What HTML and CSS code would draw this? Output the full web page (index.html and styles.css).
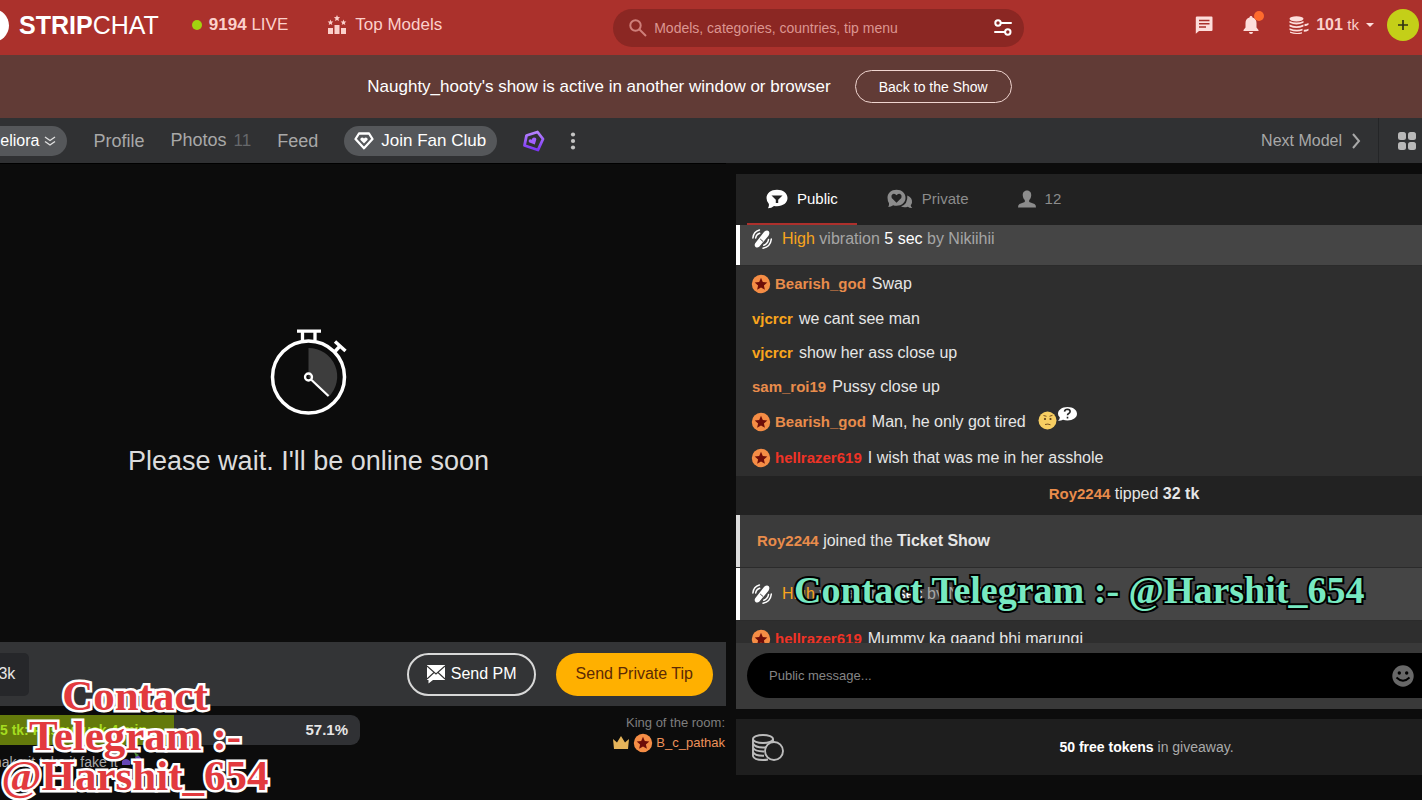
FILE: index.html
```html
<!DOCTYPE html>
<html lang="en">
<head>
<meta charset="utf-8">
<title>Stripchat</title>
<link rel="stylesheet" href="styles.css">
</head>
<body>
<svg class="defs" width="0" height="0" aria-hidden="true">
  <symbol id="star-badge" viewBox="0 0 20 20"><circle cx="10" cy="10" r="9.2" fill="#f58d45"/><path d="M10 3.8l1.8 4.1 4.5.5-3.4 3 1 4.4L10 13.5l-3.9 2.3 1-4.4-3.4-3 4.5-.5z" fill="#6e0d08"/></symbol>
  <symbol id="vibe" viewBox="0 0 20 20"><path d="M3.200 14.200L12.200 2.800q2.600-2 4.600-.6 1.300 2-.3 4.500L7.200 17.800q-1.800 1.500-3.700.2-1.500-1.700-.3-3.800z" fill="#fff"/><path d="M8.200 10l3 2.600" stroke="#444" stroke-width="1"/><path d="M.9 9C1.300 4.800 3.500 2 7.400 1M3.700 9c.3-2.400 1.600-4 4-4.800M19.300 10c-.4 4.800-3.500 8.200-8.300 9.200M16.500 10.600c-.5 2.800-2 4.600-4.700 5.600" stroke="#fff" stroke-width="1.500" fill="none" stroke-linecap="round"/></symbol>
</svg>
<div class="page">
  <header class="top">
    <a class="brand" href="#"><span class="brand-mark"></span><span><b>STRIP</b>CHAT</span></a>
    <a class="live" href="#"><i class="dot"></i><span><b>9194</b> LIVE</span></a>
    <a class="models" href="#">
      <svg width="20" height="20" viewBox="0 0 20 20" fill="#fbd0cb"><path d="M1 13h5v6H1zM7.500 10h5v9h-5zM14 13h5v6h-5zM10 0l.9 2.100 2.200.2-1.700 1.500.5 2.200L10 4.900 8.100 6l.5-2.200-1.700-1.500 2.200-.2zM3.500 4.500l.8 1.900 2.100.2-1.600 1.400.5 2-1.800-1-1.800 1 .5-2L.6 6.600l2.100-.2zM16.500 4.500l.8 1.900 2.100.2-1.600 1.400.5 2-1.800-1-1.800 1 .5-2-1.600-1.400 2.100-.2z"/></svg>
      Top Models</a>
    <form class="search">
      <svg width="18" height="18" viewBox="0 0 18 18" fill="none" stroke="#cf7f7a" stroke-width="2"><circle cx="6.500" cy="6.500" r="5.200"/><path d="M10.500 10.500l6.500 6.500"/></svg>
      <input type="text" aria-label="Search" placeholder="Models, categories, countries, tip menu">
      <button type="button" aria-label="Filters"><svg width="18" height="18" viewBox="0 0 18 18" fill="none" stroke="#fff" stroke-width="2"><circle cx="4" cy="4" r="2.700"/><path d="M7 4h10M1 13h10" stroke-linecap="round"/><circle cx="13.800" cy="13" r="2.700"/></svg></button>
    </form>
    <div class="account">
      <button type="button" aria-label="Messages"><svg width="18" height="18" viewBox="0 0 18 18"><path d="M2 .5h14.500q1 0 1 1V14q0 1-1 1H4L.8 17.800V1.500Q.8.500 2 .5z" fill="#fddedb"/><path d="M4 4.500h10.500M4 7.700h10.500M4 10.900h7" stroke="#a9302b" stroke-width="1.500"/></svg></button>
      <button type="button" class="bell" aria-label="Notifications"><svg width="16" height="18" viewBox="0 0 16 18" fill="#fddedb"><path d="M8 0c.9 0 1.500.6 1.500 1.500 2.700.6 4 2.800 4 5.500v4.500L15.500 14v1H.5v-1l2-2.500V7c0-2.700 1.300-4.900 4-5.500C6.500.6 7.100 0 8 0zM6 16h4a2 2 0 0 1-4 0z"/></svg><i class="badge"></i></button>
      <button type="button" class="tokens"><svg width="20" height="18" viewBox="0 0 20 18" fill="#fddedb"><ellipse cx="7.500" cy="2.800" rx="7" ry="2.600"/><path d="M.5 5q7 3.200 14 0v1.700q-7 3.400-14 0zM.5 8.600q7 3.200 14 0v1.800q-7 3.300-14 0zM.5 12.200q7 3 13 .6v1.700q-6 2.500-13-.6zM1 15.500q6 2.400 12 .7v1.200q-6 1.500-12-.7zM15.500 8q2.500 0 4-1v1.800q-1.500 1.300-4 1.400zM14.800 13.700q3 .1 4.700-1v1.800q-2 1.300-4.700 1.300z"/></svg><span><b>101</b> <small>tk</small></span><i class="caret"></i></button>
      <button type="button" class="plus" aria-label="Buy tokens"><svg width="12" height="12" viewBox="0 0 12 12" stroke="#303414" stroke-width="1.700"><path d="M6 1v10M1 6h10"/></svg></button>
    </div>
  </header>

  <div class="notice"><span>Naughty_hooty's show is active in another window or browser</span><button type="button">Back to the Show</button></div>

  <nav class="nav">
    <button type="button" class="chip name">meliora <svg width="12" height="12" viewBox="0 0 12 12" fill="none" stroke="#e0e0e0" stroke-width="1.400"><path d="M1 2l5 3.500L11 2M1 6.500L6 10l5-3.500"/></svg></button>
    <a href="#">Profile</a>
    <a href="#">Photos <span class="count">11</span></a>
    <a href="#">Feed</a>
    <button type="button" class="chip fan"><svg width="20" height="18" viewBox="0 0 20 18" fill="none" stroke="#fff" stroke-width="2.300" stroke-linejoin="round"><path d="M5 1.500h10l3.500 5.500L10 16.300 1.500 7z"/><path d="M10 11.500L6.300 7.700q-.2-2 1.700-2.200 1.300 0 2 1.100.7-1.100 2-1.100 1.900.2 1.700 2.200z" fill="#fff" stroke="none"/></svg>Join Fan Club</button>
    <button type="button" class="plain" aria-label="Awards"><svg width="23" height="22" viewBox="0 0 23 22"><defs><linearGradient id="violet" x2="0" y2="1"><stop stop-color="#b783ff"/><stop offset="1" stop-color="#7b35f5"/></linearGradient></defs><path d="M4.500 5.500L15.500 2l5.500 7-5 11L2.500 15.500z" fill="none" stroke="url(#violet)" stroke-width="2.800" stroke-linejoin="round"/><path d="M12.800 14.500L7 12.300q-1-1.600.4-2.700 1.200-.6 2.300.2.300-1.900 2.200-2.300 2.600 0 2.400 2z" fill="#a260ff"/></svg></button>
    <button type="button" class="plain" aria-label="More"><svg width="6" height="18" viewBox="0 0 6 18" fill="#c4c4c4"><circle cx="3" cy="2.500" r="2.100"/><circle cx="3" cy="9" r="2.100"/><circle cx="3" cy="15.500" r="2.100"/></svg></button>
    <a class="next" href="#">Next Model<svg width="9" height="16" viewBox="0 0 9 16" fill="none" stroke="#a8a8a8" stroke-width="2"><path d="M1 1l6 7-6 7"/></svg></a>
    <button type="button" class="tiles" aria-label="Grid"><svg width="18" height="18" viewBox="0 0 18 18" fill="#b8b8b8"><rect width="8" height="8" rx="2.500"/><rect x="10" width="8" height="8" rx="2.500"/><rect y="10" width="8" height="8" rx="2.500"/><rect x="10" y="10" width="8" height="8" rx="2.500"/></svg></button>
  </nav>

  <main class="main">
    <section class="left">
      <div class="video">
        <svg width="78" height="86" viewBox="0 0 78 86" fill="none" stroke="#fff"><path d="M38.500 19v29.500L58.500 68A28.500 28.500 0 0 0 38.500 19z" fill="#3d3d3d" stroke="none"/><circle cx="38.500" cy="48" r="36" stroke-width="3.500"/><path d="M27 2.200h24M32.500 2v9M45 2v9" stroke-width="3.300"/><path d="M65 12.500l10.500 9.500M70 17l-5 5.500" stroke-width="3.400"/><circle cx="38.500" cy="48" r="3.500" stroke-width="2.300"/><path d="M41 50.500L58.500 67" stroke-width="2.200"/></svg>
        <p>Please wait. I'll be online soon</p>
      </div>
      <div class="actions">
        <button type="button" class="likes">.3k</button>
        <button type="button" class="pm"><svg width="20" height="20" viewBox="0 0 20 20"><path d="M1 1h18v15H7l-4.500 3.500V16H1z" fill="#fff"/><path d="M1 2l9 8 9-8M1 15l7-6.500M19 15l-7-6.500" fill="none" stroke="#333" stroke-width="1.100"/></svg>Send PM</button>
        <button type="button" class="tip">Send Private Tip</button>
      </div>
      <div class="under">
        <div class="goal">
          <div class="bar"><div class="fill" style="width:48.200%"></div><span class="goal-text">5 tk: Pussy fuck 4 min</span><b>57.1%</b></div>
          <div class="topic">make it take it fake it <svg width="24" height="14" viewBox="0 0 24 14"><path d="M0 9q4-4 8 0v4H0zM14 3q5 0 8 10h-4q-1-5-5-7z" fill="#6547b8"/><path d="M12 0l5 3-3 2z" fill="#4b8b35"/></svg></div>
        </div>
        <div class="king"><span>King of the room:</span><span class="king-name"><svg width="18" height="14" viewBox="0 0 18 14"><path d="M1 3l4 3.500L9 0l4 6.500L17 3l-1 10H2z" fill="#e5b45a"/></svg><svg width="20" height="20"><use href="#star-badge"/></svg>B_c_pathak</span></div>
      </div>
      <div class="watermark red">Contact<br>Telegram :-<br>@Harshit_654</div>
    </section>

    <section class="right">
      <div class="tabs">
        <button type="button" class="tab active"><svg width="22" height="20" viewBox="0 0 22 20"><path d="M11 .8c6 0 10.500 3.400 10.500 8.200S17 17.200 11 17.200q-1.500 0-3-.3-2.500 2.200-6 2.300 1.300-1.900.9-4.200Q.5 12.500.5 9C.5 4.200 5 .8 11 .8z" fill="#fff"/><path d="M5.500 6.500h11l-4.300 4.300V14H9.800v-3.200z" fill="#222"/></svg>Public</button>
        <button type="button" class="tab"><svg width="26" height="20" viewBox="0 0 26 20" fill="#8c8c8c"><path d="M9.500.8c5.300 0 9 3.400 9 8s-3.700 8-9 8q-1.800 0-3.300-.5Q4 18 1.300 18q1-1.500.7-3.700Q.5 12 .5 8.800c0-4.600 3.700-8 9-8z"/><path d="M9.500 13.800L4.700 9Q3.600 6.500 5.700 5q2.200-1 3.800 1.200Q11.100 4 13.300 5q2.100 1.500 1 4z" fill="#222"/><path d="M20.300 6.500q5.200 2 4.700 7-.2 1.600-1.300 2.700.2 1.600 1.600 2.900-2.800.1-4.500-1.300-3.700 1.200-6.800-.3 7-2.500 6.300-11z"/></svg>Private</button>
        <button type="button" class="tab"><svg width="18" height="18" viewBox="0 0 18 18" fill="#8c8c8c"><path d="M9 .5c3 0 4.600 2.300 4.200 5.200-.2 1.900-.9 3.500-2 4.400v2L16.500 14q1.500.9 1.500 3.500H0Q0 14.900 1.500 14l5.300-1.900v-2C5.700 9.200 5 7.600 4.800 5.700 4.400 2.800 6 .5 9 .5z"/></svg>12</button>
      </div>
      <div class="chat">
        <div class="event vib first"><svg width="20" height="20"><use href="#vibe"/></svg><p><span class="gold">High</span> vibration <span class="bright">5 sec</span> by Nikiihii</p></div>
        <div class="msg badged"><svg width="20" height="20"><use href="#star-badge"/></svg><b class="orange">Bearish_god</b><span>Swap</span></div>
        <div class="msg"><b class="gold">vjcrcr</b><span>we cant see man</span></div>
        <div class="msg"><b class="gold">vjcrcr</b><span>show her ass close up</span></div>
        <div class="msg"><b class="orange">sam_roi19</b><span>Pussy close up</span></div>
        <div class="msg badged"><svg width="20" height="20"><use href="#star-badge"/></svg><b class="orange">Bearish_god</b><span>Man, he only got tired</span><svg class="emoji" width="40" height="24" viewBox="0 0 40 24"><circle cx="9.500" cy="14.500" r="9" fill="#f7ce62"/><path d="M5.500 9.500l3 .8M11.500 10.300l3-1M7 18.500q3-1 5.500.3" stroke="#7a5320" fill="none"/><circle cx="7" cy="13" r="1.100" fill="#5b3b16"/><circle cx="12.500" cy="13" r="1.100" fill="#5b3b16"/><path d="M29.500 1c5.500 0 9.500 2.900 9.500 6.800s-4 6.700-9.500 6.700q-2.500 0-4.500-.7-2 1.200-5 1 2-1.500 1.800-3.500Q20 9.800 20 7.800C20 3.900 24 1 29.500 1z" fill="#fff"/><path d="M26.500 5.700q.3-2.500 2.900-2.500 2.700.1 2.700 2.300 0 1.300-1.400 2-1.200.6-1.200 1.800M29.500 10.700v1.700" stroke="#222" stroke-width="1.600" fill="none"/></svg></div>
        <div class="msg badged"><svg width="20" height="20"><use href="#star-badge"/></svg><b class="red-name">hellrazer619</b><span>I wish that was me in her asshole</span></div>
        <div class="tipped"><b class="orange">Roy2244</b> tipped <b>32 tk</b></div>
        <div class="event joined"><p><b class="orange">Roy2244</b> joined the <b>Ticket Show</b></p></div>
        <div class="event vib"><svg width="20" height="20"><use href="#vibe"/></svg><p><span class="gold">High</span> vibration <span class="bright">5 sec</span> by Nikiihii</p></div>
        <div class="msg badged"><svg width="20" height="20"><use href="#star-badge"/></svg><b class="red-name">hellrazer619</b><span>Mummy ka gaand bhi marungi</span></div>
        <div class="watermark mint">Contact Telegram :- @Harshit_654</div>
      </div>
      <form class="compose">
        <div class="field"><input type="text" aria-label="Public message" placeholder="Public message..."><button type="button" aria-label="Emoji"><svg width="22" height="22" viewBox="0 0 22 22"><circle cx="11" cy="11" r="10.700" fill="#686868"/><circle cx="7.300" cy="8" r="1.700"/><circle cx="14.700" cy="8" r="1.700"/><path d="M4.500 12.500q6.500 6.500 13 0" fill="none" stroke="#000" stroke-width="1.800"/></svg></button></div>
      </form>
      <div class="giveaway"><svg width="32" height="27" viewBox="0 0 32 27" fill="none" stroke="#bcbcbc" stroke-width="1.900"><ellipse cx="11" cy="5" rx="10" ry="4"/><path d="M1 5v17q1 4 10 4 3 0 5-.5M21 5v3M1 9.500q2 4 10 4 2 0 3.500-.3M1 13.700q2 4 11 3.800M1 18q2 4 11 3.700"/><circle cx="22" cy="17" r="9"/></svg><p><b>50 free tokens</b> in giveaway.</p></div>
    </section>
  </main>
</div>
</body>
</html>
```
FILE: styles.css
```css
* { box-sizing: border-box; }
body {
  margin: 0;
  background: #0c0c0c;
  color: #e6e6e6;
  font: 16px/20px "Liberation Sans", Arial, sans-serif;
}
.defs { position: absolute; }
p { margin: 0; }
a { color: inherit; text-decoration: none; }
button, input { font: inherit; color: inherit; background: none; border: 0; padding: 0; margin: 0; }
svg { flex: none; display: block; }
.page { display: flex; flex-direction: column; height: 100vh; min-height: 640px; overflow: hidden; }

.top {
  position: relative;
  display: flex;
  align-items: center;
  flex: none;
  height: 55px;
  padding-bottom: 5px;
  background: #ab312c;
  color: #fbd0cb;
}
.brand { display: flex; align-items: center; gap: 10px; margin-left: -24px; font-size: 25px; color: #fff; }
.brand-mark { width: 33px; height: 33px; border-radius: 50%; background: #fff; }
.live { display: flex; align-items: center; gap: 7px; margin-left: 33px; font-size: 17px; }
.dot { width: 10px; height: 10px; border-radius: 50%; background: #a2d30f; }
.models { display: flex; align-items: center; gap: 8px; margin-left: 39px; font-size: 17px; }
.search {
  display: flex;
  align-items: center;
  gap: 7px;
  flex: 0 1 411px;
  height: 38px;
  margin: 6px 0 0 171px;
  padding: 0 12px 0 16px;
  border-radius: 20px;
  background: #8b2723;
}
.search input { flex: 1; min-width: 0; font-size: 14px; outline: 0; }
.search input::placeholder { color: #dc9691; opacity: 1; }
.account { display: flex; align-items: center; margin-left: auto; margin-right: 3px; gap: 30px; }
.bell { position: relative; }
.badge { position: absolute; top: -5px; right: -5px; width: 10px; height: 10px; border-radius: 50%; background: #ff6b2d; }
.tokens { display: flex; align-items: center; gap: 7px; }
.tokens small { font-size: 15px; }
.caret { border: 4px solid transparent; border-top-color: #fddedb; border-bottom: 0; }
.plus { display: grid; place-items: center; width: 32px; height: 32px; margin-left: -17px; border-radius: 50%; background: #c4cf18; }

.notice {
  display: flex;
  align-items: center;
  justify-content: center;
  gap: 24px;
  flex: none;
  height: 63px;
  padding-right: 43px;
  background: #613b36;
  color: #fff;
  font-size: 17px;
}
.notice button { height: 33px; padding: 0 23px; border: 1px solid #f0d5d0; border-radius: 17px; font-size: 14px; }

.nav { display: flex; align-items: center; flex: none; height: 45px; background: #303133; color: #a8a8a8; font-size: 17px; }
.nav > a { margin-left: 26px; font-size: 18px; }
.chip { display: flex; align-items: center; height: 30px; border-radius: 15px; background: #55575a; color: #fff; }
.name { gap: 5px; margin-left: -25px; padding: 0 11px 0 12px; font-size: 16px; }
.count { margin-left: 2px; font-size: 17px; color: #66686b; }
.fan { gap: 7px; margin-left: 26px; padding: 0 11px 0 10px; }
.plain { margin-left: 25px; }
.nav .next { display: flex; align-items: center; gap: 10px; margin-left: auto; margin-right: 17px; font-size: 16px; }
.tiles { display: grid; align-items: center; align-self: stretch; width: 44px; padding-left: 19px; border-left: 1px solid #242527; }

.main { display: grid; grid-template-columns: 726fr 686fr; gap: 10px; flex: 1; min-height: 0; }
.left, .right { display: flex; flex-direction: column; min-width: 0; min-height: 0; position: relative; }
.video { display: flex; flex: 1; flex-direction: column; align-items: center; justify-content: center; gap: 29px; padding-right: 109px; border-top: 1px solid #000; font-size: 27px; line-height: 34px; color: #dcdcdc; }
.actions { display: flex; align-items: center; gap: 20px; flex: none; height: 64px; padding-right: 13px; background: #333436; font-size: 16px; }
.likes { height: 43px; margin: 0 auto 0 -16px; padding: 0 14px 0 10px; border-radius: 5px; background: #26272a; }
.pm { display: flex; align-items: center; gap: 5px; height: 43px; padding: 0 17px; border: 2px solid #d8d8d8; border-radius: 22px; color: #fff; }
.tip { height: 43px; padding: 0 20px; border-radius: 22px; background: #ffb000; color: #5c2a05; }
.under { display: flex; justify-content: space-between; align-items: flex-start; flex: none; height: 94px; padding: 9px 1px 0 0; }
.goal { flex: 0 1 360px; }
.bar { position: relative; display: flex; align-items: center; justify-content: space-between; height: 30px; padding-right: 12px; border-radius: 0 9px 9px 0; background: #303134; font-size: 15px; overflow: hidden; }
.fill { position: absolute; inset: 0 auto 0 0; background: #647a0b; }
.goal-text { position: relative; color: #a5dc20; font-weight: bold; font-size: 14px; }
.topic { display: flex; gap: 4px; margin: 7px 0 0 -10px; font-size: 14px; color: #a9a9a9; }
.king { display: flex; flex-direction: column; align-items: flex-end; margin-top: -2px; font-size: 13px; color: #7e7e7e; }
.king-name { display: flex; align-items: center; gap: 3px; color: #ee925b; }

.right { padding: 11px 0 25px; }
.tabs { display: flex; flex: none; height: 51px; padding-left: 11px; background: #222; font-size: 15px; }
.tab { display: flex; align-items: center; gap: 9px; padding: 0 19px; margin-right: 11px; color: #8c8c8c; border-bottom: 2px solid transparent; }
.tab.active { color: #fff; border-color: #ad302c; }
.chat { position: relative; display: flex; flex-direction: column; flex: 1; min-height: 0; overflow: hidden; background: #2e2e2e; }
.chat > * { flex: none; }
.msg { display: flex; align-items: center; gap: 6px; height: 34px; padding-left: 16px; }
.msg.badged { height: 36px; }
.msg b { font-size: 15px; }
.msg svg { margin: 0 -2px 0 -1px; }
.msg .emoji { margin: -8px 0 0 6px; }
.orange { color: #e98c4b; }
.gold { color: #f9a51d; }
.red-name { color: #f03326; }
.bright { color: #fff; }
.event { display: flex; align-items: center; gap: 10px; height: 53px; border-bottom: 1px solid #2b2b2b; background: #454545; box-shadow: inset 4px 0 #fff; padding-left: 16px; }
.vib { color: #a6a6a6; }
.event.first { height: 41px; padding-bottom: 12px; }
.joined { padding-left: 21px; background: #3b3b3b; box-shadow: inset 4px 0 #ddd; }
.joined .orange, .tipped .orange { font-size: 15px; }
.tipped { height: 39px; padding: 8px 0 0 90px; background: #222; text-align: center; }
.compose { flex: none; padding: 10px 0 11px 11px; background: #393939; }
.field { display: flex; align-items: center; height: 45px; padding: 0 8px 0 22px; border-radius: 23px 0 0 23px; background: #000; }
.field input { flex: 1; min-width: 0; font-size: 13px; outline: 0; }
.field input::placeholder { color: #858585; opacity: 1; }
.giveaway { display: flex; align-items: center; flex: none; height: 56px; margin-top: 10px; padding-left: 16px; background: #1e1e1e; color: #aaa; font-size: 14px; }
.giveaway p { flex: 1; padding-left: 87px; text-align: center; }
.giveaway b { color: #fff; }

.watermark { position: absolute; font-family: "Liberation Serif", serif; font-weight: bold; text-align: center; paint-order: stroke fill; }
.red { left: 0; bottom: 4px; width: 270px; font-size: 43px; line-height: 40px; color: #e23a3e; -webkit-text-stroke: 5px #fff; }
.mint { left: 58px; bottom: 31px; font-size: 38px; line-height: 44px; white-space: nowrap; color: #77e9c1; -webkit-text-stroke: 4px #000; }
```
